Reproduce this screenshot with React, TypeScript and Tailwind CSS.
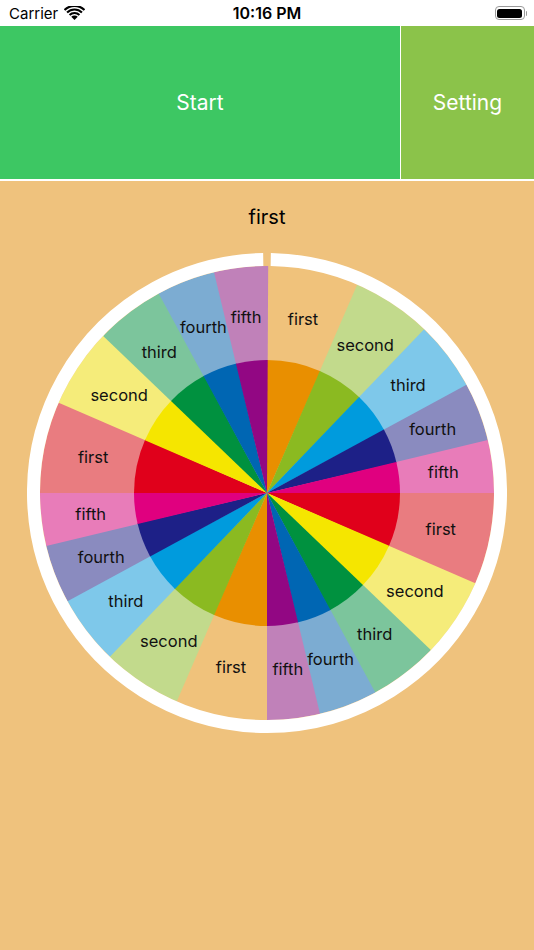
import React from "react";

const CX = 240;
const CY = 240;
const OUTER = ["#F0C27B", "#C2DA8C", "#7EC8EA", "#8A8BBF", "#E87CB9", "#E97C80", "#F5EC7A", "#7CC59C", "#7CACD2", "#C081B9"];
const INNER = ["#E98F00", "#8BBA21", "#009BDD", "#1D2087", "#E0007F", "#E0001B", "#F5E600", "#00913F", "#0066B3", "#920783"];
const NAMES = ["first", "second", "third", "fourth", "fifth"];
const OFFS = [0, 23.4, 43.8, 61.5, 76.5, 90];

function pt(r: number, deg: number): [number, number] {
  const a = (deg * Math.PI) / 180;
  return [CX + r * Math.sin(a), CY - r * Math.cos(a)];
}

function sector(r: number, a0: number, a1: number) {
  const [x0, y0] = pt(r, a0);
  const [x1, y1] = pt(r, a1);
  return `M${CX},${CY} L${x0.toFixed(3)},${y0.toFixed(3)} A${r},${r} 0 0 1 ${x1.toFixed(3)},${y1.toFixed(3)} Z`;
}

function ringPath() {
  const r = 233.5;
  const half = 0.92;
  const [x0, y0] = pt(r, half);
  const [x1, y1] = pt(r, 360 - half);
  return `M${x0},${y0} A${r},${r} 0 1 1 ${x1},${y1}`;
}

const SEGS = Array.from({ length: 20 }, (_, i) => {
  const q = Math.floor(i / 5);
  const k = i % 5;
  const a0 = q * 90 + OFFS[k];
  const a1 = q * 90 + OFFS[k + 1];
  return { i, a0, a1 };
});

function Wheel() {
  return (
    <svg width={480} height={480} viewBox="0 0 480 480" className="block mx-auto">
      {SEGS.map(({ i, a0, a1 }) => (
        <path key={`o${i}`} d={sector(227, a0, a1 + 0.3)} fill={OUTER[i % 10]} />
      ))}
      {SEGS.map(({ i, a0, a1 }) => (
        <path key={`n${i}`} d={sector(133, a0, a1 + 0.3)} fill={INNER[i % 10]} />
      ))}
      <path d={ringPath()} fill="none" stroke="#FFFFFF" strokeWidth={13} />
      {SEGS.map(({ i, a0, a1 }) => {
        const mid = (a0 + a1) / 2;
        const [x, y] = pt(177.5, mid);
        return (
          <text
            key={`t${i}`}
            x={x}
            y={y}
            textAnchor="middle"
            dominantBaseline="central"
            fontSize={16.5}
            fill="#111"
            style={{ fontFamily: "Inter, 'Noto Sans', sans-serif" }}
          >
            {NAMES[i % 5]}
          </text>
        );
      })}
    </svg>
  );
}

function Wifi() {
  return (
    <svg width="21" height="15" viewBox="0 0 20 14">
      <path d="M10 13.2 L6.9 10.1 A4.4 4.4 0 0 1 13.1 10.1 Z" fill="#000" />
      <path d="M4.6 7.8 A7.6 7.6 0 0 1 15.4 7.8 L14.0 9.2 A5.6 5.6 0 0 0 6.0 9.2 Z" fill="#000" />
      <path d="M2.2 5.4 A11 11 0 0 1 17.8 5.4 L16.4 6.8 A9 9 0 0 0 3.6 6.8 Z" fill="#000" />
      <path d="M-0.2 3.0 A14.4 14.4 0 0 1 20.2 3.0 L18.8 4.4 A12.4 12.4 0 0 0 1.2 4.4 Z" fill="#000" />
    </svg>
  );
}

function Battery() {
  return (
    <div className="flex items-center">
      <div className="w-[30px] h-[14px] rounded-[4px] border border-[#9a9a9a] p-[1.5px]">
        <div className="w-full h-full rounded-[2.5px] bg-black" />
      </div>
      <div className="w-[1.5px] h-[5px] rounded-r-sm bg-[#9a9a9a] ml-[1px]" />
    </div>
  );
}

export default function App() {
  return (
    <div className="min-h-screen flex flex-col bg-[#EFC27D]" style={{ fontFamily: "Inter, 'Noto Sans', sans-serif" }}>
      <div className="h-[26px] bg-white flex items-center px-[9px] relative">
        <div className="flex items-center gap-[6px]">
          <span className="text-[15px] text-black leading-none">Carrier</span>
          <Wifi />
        </div>
        <span className="absolute left-0 right-0 text-center text-[16px] font-semibold text-black leading-none pointer-events-none">10:16 PM</span>
        <div className="ml-auto mr-[-2px]">
          <Battery />
        </div>
      </div>
      <div className="h-[153px] flex bg-white gap-[1px]">
        <div className="w-[400px] bg-[#3DC763] flex items-center justify-center text-white text-[21px]">Start</div>
        <div className="flex-1 bg-[#8BC34A] flex items-center justify-center text-white text-[21px]">Setting</div>
      </div>
      <div className="h-[2px] bg-white" />
      <div className="flex-1 flex flex-col items-center pt-[24px]">
        <div className="h-[24px] leading-[24px] text-[20px] text-black">first</div>
        <div className="mt-[24px]">
          <Wheel />
        </div>
      </div>
    </div>
  );
}
